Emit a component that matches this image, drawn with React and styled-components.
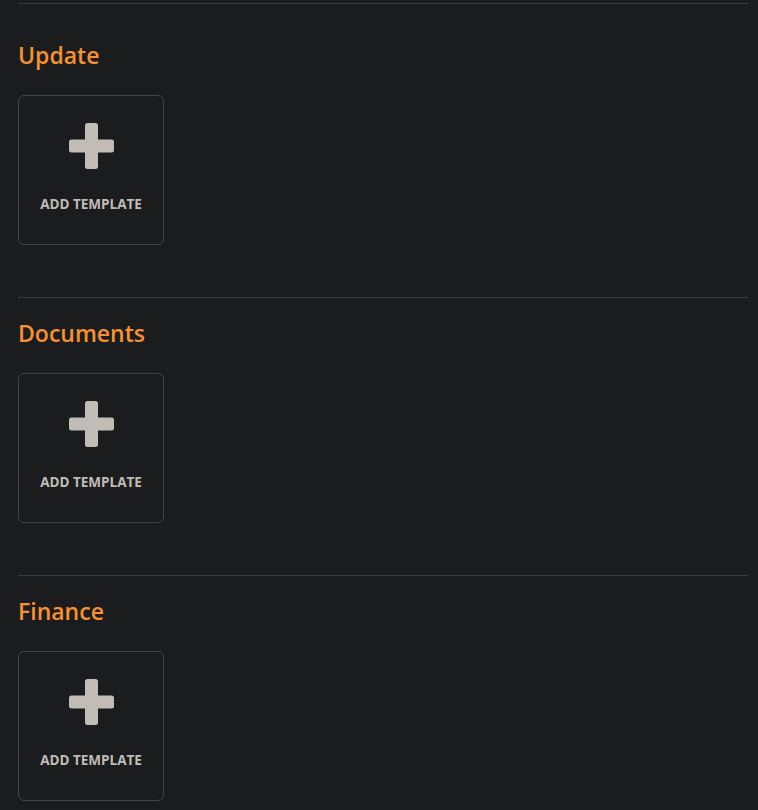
import React from 'react'
import styled, { createGlobalStyle } from 'styled-components'

const GlobalStyle = createGlobalStyle`
  html, body {
    margin: 0;
    padding: 0;
    background-color: #1b1c1e;
  }
  body {
    font-family: 'Open Sans', 'Noto Sans', sans-serif;
  }
`

const Page = styled.div`
  padding: 3px 10px 0 18px;
  min-height: 810px;
  box-sizing: border-box;
`

const Section = styled.section`
  border-top: 1px solid #3d3d3f;
  padding-top: ${props => props.first ? '35px' : '19px'};
  padding-bottom: 52px;
`

const Heading = styled.h2`
  margin: 0 0 24px;
  font-size: 23px;
  line-height: 32px;
  font-weight: 600;
  color: #f7922e;
`

const TemplateCard = styled.button`
  width: 146px;
  height: 150px;
  box-sizing: border-box;
  border: 1px solid #444447;
  border-radius: 6px;
  background: transparent;
  display: flex;
  flex-direction: column;
  align-items: center;
  padding: 27px 0 0;
  gap: 27px;
  cursor: pointer;
  font-family: inherit;

  &:hover {
    border-color: #5a5a5e;
  }
`

const CardLabel = styled.span`
  font-size: 13.5px;
  line-height: 16px;
  font-weight: 700;
  color: #c0bcb7;
`

const PlusIcon = () => (
  <svg width="45" height="46" viewBox="0 0 45 46" fill="#c1bcb6">
    <rect x="16" y="0" width="13" height="46" rx="2.5" />
    <rect x="0" y="16.5" width="45" height="13" rx="2.5" />
  </svg>
)

const sections = ['Update', 'Documents', 'Finance']

export default function App() {
  return (
    <>
      <GlobalStyle />
      <Page>
        {sections.map((title, index) => (
          <Section key={title} first={index === 0}>
            <Heading>{title}</Heading>
            <TemplateCard>
              <PlusIcon />
              <CardLabel>ADD TEMPLATE</CardLabel>
            </TemplateCard>
          </Section>
        ))}
      </Page>
    </>
  )
}
